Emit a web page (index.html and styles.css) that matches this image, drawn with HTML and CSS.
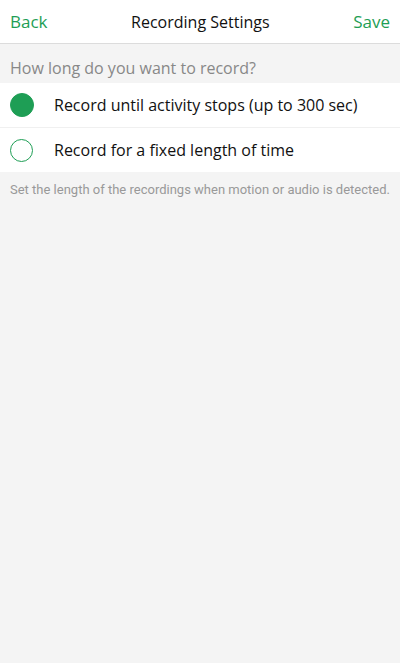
FILE: index.html
```html
<!DOCTYPE html>
<html>
<head>
<meta charset="utf-8">
<link rel="stylesheet" href="styles.css">
</head>
<body>
<div class="app">
  <header class="nav">
    <span class="nav-btn">Back</span>
    <span class="nav-title">Recording Settings</span>
    <span class="nav-btn">Save</span>
  </header>
  <div class="section-title">How long do you want to record?</div>
  <div class="list">
    <div class="row">
      <span class="radio checked"></span>
      <span class="row-label">Record until activity stops (up to 300 sec)</span>
    </div>
    <div class="row">
      <span class="radio"></span>
      <span class="row-label">Record for a fixed length of time</span>
    </div>
  </div>
  <div class="note">Set the length of the recordings when motion or audio is detected.</div>
</div>
</body>
</html>
```
FILE: styles.css
```css
html, body {
  margin: 0;
  padding: 0;
  background: #f4f4f4;
  font-family: "Open Sans", "Noto Sans", sans-serif;
}
.app {
  width: 400px;
  min-height: 663px;
  background: #f4f4f4;
}
.nav {
  height: 44px;
  background: #fff;
  border-bottom: 1px solid #dcdcdc;
  display: flex;
  align-items: center;
  justify-content: space-between;
  padding: 0 10px;
  box-sizing: border-box;
}
.nav-btn {
  color: #1e9e55;
  font-size: 17px;
}
.nav-title {
  color: #111;
  font-size: 16px;
}
.section-title {
  height: 39px;
  box-sizing: border-box;
  padding: 14px 10px 5px;
  line-height: 20px;
  color: #888;
  font-size: 16px;
}
.list {
  background: #fff;
}
.row {
  height: 44px;
  display: flex;
  align-items: center;
  padding-left: 10px;
}
.row + .row {
  border-top: 1px solid #f0f0f0;
}
.radio {
  width: 23px;
  height: 23px;
  border-radius: 50%;
  border: 1px solid #1e9e55;
  box-sizing: border-box;
  margin-right: 21px;
  flex: none;
}
.radio.checked {
  background: #1e9e55;
  width: 24px;
  height: 24px;
  margin-right: 20px;
}
.row-label {
  color: #111;
  font-size: 16px;
}
.note {
  padding: 10px 10px;
  color: #999;
  font-family: Roboto, "Noto Sans", sans-serif;
  font-size: 13px;
  white-space: nowrap;
}
```
